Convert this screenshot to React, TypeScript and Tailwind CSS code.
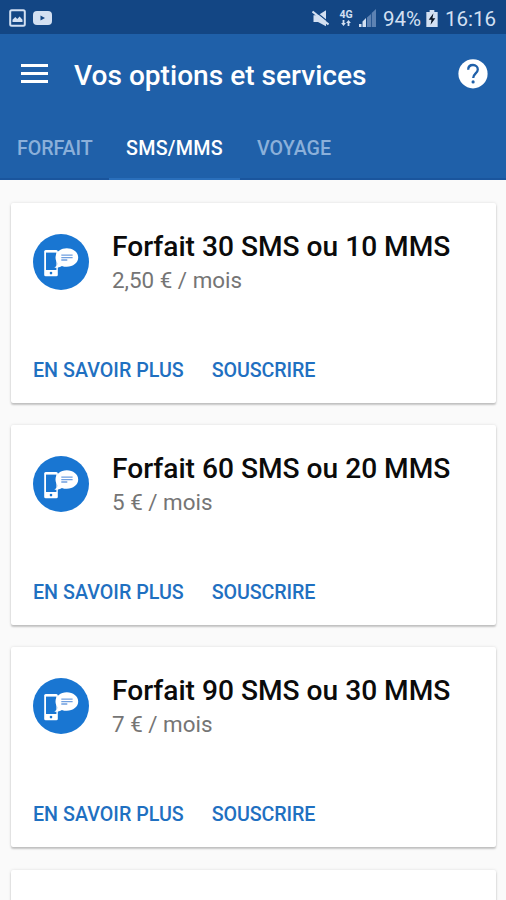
const plans = [
  { title: 'Forfait 30 SMS ou 10 MMS', price: '2,50 € / mois' },
  { title: 'Forfait 60 SMS ou 20 MMS', price: '5 € / mois' },
  { title: 'Forfait 90 SMS ou 30 MMS', price: '7 € / mois' },
];

function PlanIcon() {
  return (
    <svg viewBox="0 0 56 56" className="h-14 w-14 shrink-0">
      <circle cx="28" cy="28" r="28" fill="#1976d2" />
      <rect x="11.2" y="16" width="13.6" height="26.300" rx="1.500" fill="#fff" />
      <rect x="13" y="18.600" width="10.400" height="17.400" fill="#1976d2" />
      <circle cx="18" cy="39.100" r="1.300" fill="#1976d2" />
      <path
        d="M33.800 14.300c6.300 0 11.400 4 11.400 9.200s-5.100 9.300-11.400 9.300c-1.900 0-3.400-.3-4.900-.9-2 1.300-4.500 1.900-7.700 1.700 1.900-.9 3.300-2.300 3.700-4-1.500-1.600-2.400-3.700-2.400-6.100 0-5.200 5-9.200 11.300-9.200z"
        fill="#fff"
      />
      <path d="M28.300 21.200h11.300M28.300 23.600h11.300M28.300 26h6" stroke="#6f9fe0" strokeWidth="1.300" />
    </svg>
  );
}

function StatusBar() {
  return (
    <div className="flex h-[34px] shrink-0 items-center justify-between bg-[#134684] pl-[9px] pr-[9px] text-[#d3e0f2]">
      <div className="flex items-center gap-[7px] pt-[2px]">
        <svg viewBox="0 0 17 18" className="h-[18px] w-[17px]">
          <rect x="1.200" y="1.200" width="14.600" height="15.600" rx="1.500" fill="none" stroke="currentColor" strokeWidth="2" />
          <path d="M3.500 13V10.800L6.300 8l2 2 2.300-2.500 2.900 3.300V13z" fill="currentColor" />
        </svg>
        <svg viewBox="0 0 19 14" className="h-[14px] w-[19px]">
          <rect width="19" height="14" rx="4" fill="currentColor" />
          <path d="M7.500 4.600v4.800l4.500-2.400z" fill="#134684" />
        </svg>
      </div>
      <div className="flex items-center">
        <svg viewBox="0 0 17 17" className="mr-[10px] mt-[2px] h-[17px] w-[17px]">
          <path d="M1.500 5.300h4.500L14 .3v16L6 12H1.500z" fill="currentColor" />
          <path d="M1.500 0L17 12.500" stroke="#134684" strokeWidth="1.300" />
          <path d="M.5 1.500L16.500 14.500" stroke="currentColor" strokeWidth="2.200" />
        </svg>
        <div className="mr-[6px] mt-[2px] flex w-[14px] flex-col items-center">
          <span className="text-[10.500px] leading-[9px] font-bold">4G</span>
          <svg viewBox="0 0 10 6" className="mt-[1px] h-[6px] w-[10px]">
            <path d="M2.500 6L.1 3h1.500V0h1.800v3h1.500zM7.500 0L5.100 3h1.500v3h1.800V3h1.500z" fill="currentColor" />
          </svg>
        </div>
        <svg viewBox="0 0 18 18" className="mr-[6px] mt-[1px] h-[18px] w-[18px]">
          <path d="M0 15h2.500v3H0zM3.500 12.500L7 9v9H3.500z" fill="currentColor" />
          <path d="M8 8.500L12 5v13H8zM12.700 4L17 0v18h-4.300z" fill="#5d82b3" />
        </svg>
        <span className="mt-[3px] w-[39px] whitespace-nowrap text-[20.500px] leading-6">94%</span>
        <svg viewBox="0 0 12 18" className="mr-[7px] ml-[4px] mt-[3px] h-[17px] w-[12px]">
          <path d="M3.500 0h5v2H12v16H0V2h3.500z" fill="currentColor" />
          <path d="M7.500 3.500L2.500 10.300h3L4.500 15.500 9.500 8.700h-3z" fill="#0a1626" />
        </svg>
        <span className="mt-[3px] w-[52px] whitespace-nowrap text-[20.500px] leading-6">16:16</span>
      </div>
    </div>
  );
}

function PlanCard({ title, price }: { title: string; price: string }) {
  return (
    <article className="h-[200px] shrink-0 rounded-[2px] bg-white pl-[22px] shadow-[0_2px_2px_rgba(0,0,0,0.2),0_0_3px_rgba(0,0,0,0.12)]">
      <div className="flex h-[149px] pt-[31px]">
        <PlanIcon />
        <div className="ml-[23px] -mt-[3px]">
          <h2 className="whitespace-nowrap text-[28.130px] leading-8 font-medium text-[#0b0b0b]">{title}</h2>
          <p className="mt-[3px] whitespace-nowrap text-[22.400px] leading-7 text-[#757575]">{price}</p>
        </div>
      </div>
      <div className="flex gap-[28px] text-[19.700px] leading-[38px] font-medium text-[#1f70c1]">
        <button className="whitespace-nowrap">EN SAVOIR PLUS</button>
        <button className="whitespace-nowrap tracking-[-0.130px]">SOUSCRIRE</button>
      </div>
    </article>
  );
}

export default function App() {
  return (
    <div className="flex h-[900px] w-[506px] flex-col overflow-hidden bg-[#fafafa] font-[Roboto,sans-serif]">
      <StatusBar />
      <header className="h-[146px] shrink-0 bg-[#1f60a9] text-white">
        <div className="flex h-[80px] items-center pl-[21px] pr-[18px]">
          <div className="-mt-[2px] flex w-[27px] flex-col gap-[5px]">
            <span className="h-[3px] bg-white" />
            <span className="h-[3px] bg-white" />
            <span className="h-[3px] bg-white" />
          </div>
          <h1 className="ml-[26px] mt-[4px] flex-1 whitespace-nowrap text-[28.100px] font-medium">Vos options et services</h1>
          <svg viewBox="0 0 30 30" className="h-[30px] w-[30px]">
            <circle cx="15" cy="14.800" r="14.600" fill="#fff" />
            <path
              d="M10.200 10.700C10.200 7.800 12.200 6 15 6s4.800 1.800 4.800 4.400c0 3.800-4.600 4.200-4.600 8.600"
              fill="none"
              stroke="#1f60a9"
              strokeWidth="2.300"
            />
            <circle cx="15.100" cy="22.900" r="1.600" fill="#1f60a9" />
          </svg>
        </div>
        <nav className="flex h-[66px] text-[19.700px] font-medium text-[#8bb0da]">
          <a className="w-[109px] border-b-2 border-[#1a559d] pl-[17px] pt-[20px] tracking-[-0.100px]">FORFAIT</a>
          <a className="w-[131px] border-b-2 border-[#2a6fbb] pl-[17px] pt-[20px] tracking-[0.250px] text-white">SMS/MMS</a>
          <a className="flex-1 border-b-2 border-[#1a559d] pl-[17px] pt-[20px]">VOYAGE</a>
        </nav>
      </header>
      <main className="flex flex-1 flex-col gap-[22.200px] pl-[11px] pr-[10px] pt-[23px]">
        {plans.map((plan) => (
          <PlanCard key={plan.title} title={plan.title} price={plan.price} />
        ))}
        <div className="h-[200px] shrink-0 rounded-[2px] bg-white shadow-[0_2px_2px_rgba(0,0,0,0.2),0_0_3px_rgba(0,0,0,0.12)]" />
      </main>
    </div>
  );
}
